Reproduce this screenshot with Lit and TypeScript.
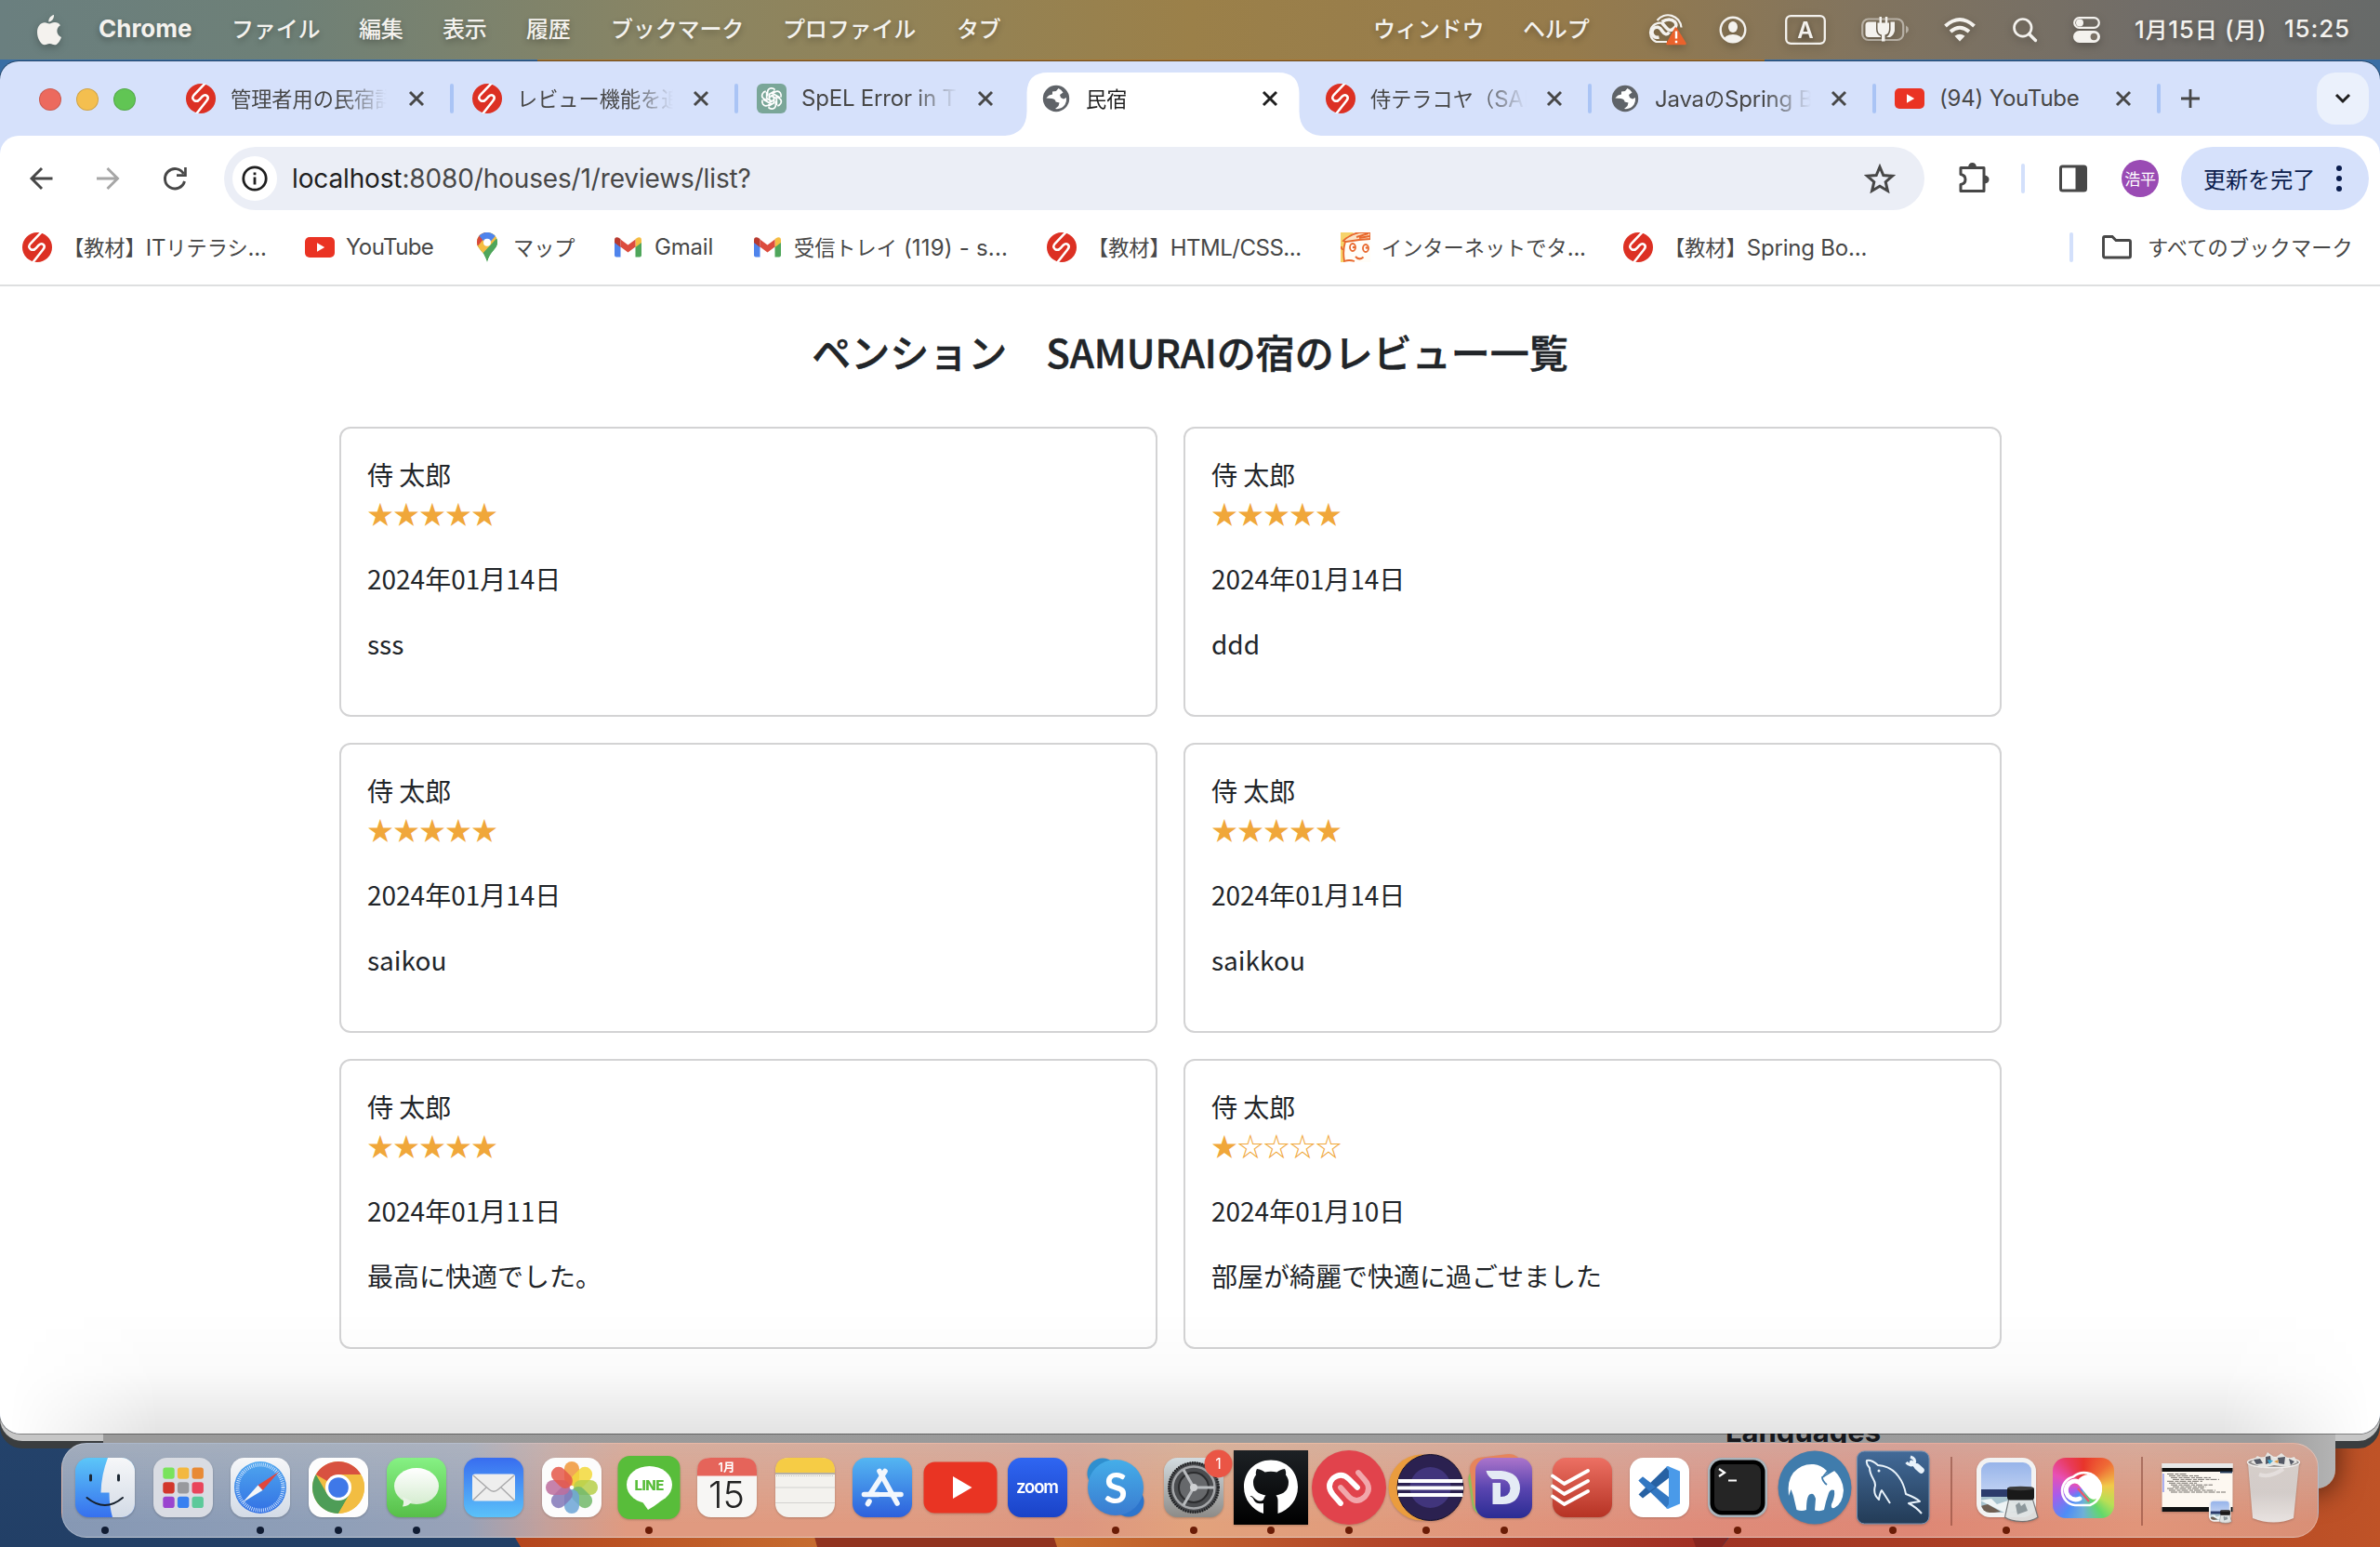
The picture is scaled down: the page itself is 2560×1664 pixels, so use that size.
import { LitElement, html, css, svg, nothing, type TemplateResult } from "lit";
import { customElement, property } from "lit/decorators.js";
import { classMap } from "lit/directives/class-map.js";

const CJK = /([\u3000-\u30ff\u3400-\u9fff\uff00-\uffef]+)/;

/** Japanese runs are set slightly smaller than the Latin ones beside them. */
const mixed = (text: string) =>
  text.split(CJK).map((run) => (CJK.test(run) ? html`<span class="cjk">${run}</span>` : run));

const cjkStyle = css`
  .cjk {
    font-size: 0.925em;
    font-family: "Noto Sans CJK JP", sans-serif;
    letter-spacing: 0;
  }
`;

/* ---------- small icons ---------- */

const samurai = html`<svg class="fav" viewBox="0 0 34 34">
  <circle cx="17" cy="17" r="17" fill="#dc3023" />
  <path d="M22.5 -1 L9.5 12.5 Q5.8 16.8 9.5 19.2 Q13 21.2 16 17.6 L18.8 14.6 Q21.6 11.8 24 13.8 Q26.6 16.2 23.6 19.6 L11.5 35"
    fill="none" stroke="#fff" stroke-width="2.7" stroke-linejoin="round" />
</svg>`;

const youtube = html`<svg class="fav" viewBox="0 0 32 32">
  <rect x="0" y="5" width="32" height="22" rx="5" fill="#ea3323" />
  <path d="M13 11.3 L21.2 16 L13 20.7 Z" fill="#fff" />
</svg>`;

const globe = html`<svg class="fav" viewBox="0 0 32 32">
  <circle cx="16" cy="16" r="14.2" fill="#5f6368" />
  <path d="M18.500 5 L16 8 L12 8.5 L12 11.5 L8.500 12.5 L5.300 15.5 L11.500 16 Q15.500 16.5 15.500 19.5 L19.500 20.5 L18.500 24 L15 27 Q21.500 28 25.500 22.5 Q27.500 19 27 15 L24 16.5 L21 15 L20 12 L23.500 9.5 Q21.500 6 18.500 5 Z" fill="#fff" />
</svg>`;

const openai = html`<svg class="fav" viewBox="0 0 32 32">
  <rect width="32" height="32" rx="6" fill="#7aa698" />
  <g fill="none" stroke="#fff" stroke-width="1.7">
    ${[0, 60, 120, 180, 240, 300].map(
      (a) => svg`<path transform=${`rotate(${a} 16 16)`} d="M11.6 13.4 V9 Q11.8 5.2 15.6 4.9 Q18 4.8 19.6 6.6 M13.6 18.4 V11.2 L19.6 7.7" />`
    )}
  </g>
</svg>`;

const mapPin = html`<svg class="fav" viewBox="0 0 32 32">
  <clipPath id="pin"><path d="M16 0 C9.500 0 5 4.800 5 10.800 C5 18 13.500 20.500 16 32 C18.500 20.500 27 18 27 10.800 C27 4.800 22.500 0 16 0 Z" /></clipPath>
  <g clip-path="url(#pin)">
    <rect width="32" height="32" fill="#4fa65b" />
    <path d="M0 0 H32 L8 26 L0 20 Z" fill="#f5bd42" />
    <path d="M0 0 H18 L4 17 Z" fill="#d9483b" />
    <path d="M7 3 L14 -2 H30 L16 14 Z" fill="#4f84ec" />
    <path d="M30 2 L27 6 L8 30 H32 Z" fill="#4fa65b" />
  </g>
  <circle cx="16" cy="10.800" r="4" fill="#fff" />
</svg>`;

const gmail = html`<svg class="fav" viewBox="0 0 32 32">
  <path d="M1 10 L7.500 14.500 V26.500 H3 Q1 26.500 1 24.500 Z" fill="#4f84ec" />
  <path d="M30 10 L23.500 14.500 V26.500 H28 Q30 26.500 30 24.500 Z" fill="#4fa65b" />
  <path d="M23.500 7 L26 5.500 Q30 4.500 30 8.500 V11 L23.500 16 Z" fill="#f5bd42" />
  <path d="M7.500 7 L5 5.500 Q1 4.500 1 8.500 V11 L7.500 16 Z" fill="#b83a2f" />
  <path d="M7.500 7.500 L15.500 13.500 L23.500 7.500 V15.500 L15.500 21.500 L7.500 15.500 Z" fill="#dc4c3e" />
</svg>`;

const face = html`<svg class="fav" viewBox="0 0 32 32">
  <rect width="32" height="32" fill="#fffdf8" />
  <path d="M0 0 H14 L4 12 V32 H0 Z" fill="#f6d36a" />
  <path d="M3 9 Q10 2 20 0 H32 V7 L20 8 L6 10 Z" fill="#fbe3c8" stroke="#e8692e" stroke-width="1.800" />
  <path d="M17 5 L30 1 M20 6 L31 4" stroke="#e8692e" stroke-width="2" />
  <path d="M5 10 Q2 20 4 31 Q9 29 15 31 M1 15 Q0 18 4 19" fill="none" stroke="#e8692e" stroke-width="1.800" />
  <ellipse cx="13" cy="16" rx="3" ry="4" fill="#fff" stroke="#e8692e" stroke-width="1.800" />
  <ellipse cx="27" cy="17" rx="3" ry="4" fill="#fff" stroke="#e8692e" stroke-width="1.800" />
  <circle cx="14" cy="16" r="1.300" fill="#e8692e" /><circle cx="28" cy="16.500" r="1.300" fill="#e8692e" />
  <path d="M16 26 Q20 30.500 24.500 26.500" fill="none" stroke="#e8692e" stroke-width="2" />
</svg>`;

const cross = html`<svg class="x" viewBox="0 0 24 24"><path d="M5 5 L19 19 M19 5 L5 19" stroke="currentColor" stroke-width="2.900" /></svg>`;

/* ---------- menu bar ---------- */

@customElement("mac-menubar")
class MacMenubar extends LitElement {
  static styles = [
    cjkStyle,
    css`
      :host {
        position: relative;
        display: grid;
        grid-template-columns: 1477px 293px 1fr;
        height: 64px;
        align-items: center;
        color: #f4f2ee;
        font: 500 26px Inter, "Noto Sans CJK JP", sans-serif;
        white-space: nowrap;
        background: linear-gradient(90deg, #6a7f7f 0%, #6e8077 12%, #8b8562 29%, #9b8049 50%, #967b4c 66%, #82745e 78%, #716d68 90%, #676a69 100%);
        text-shadow: 0 3px 7px rgba(0, 0, 0, 0.3);
      }
      .apps {
        display: grid;
        grid-template-columns: 66px 143px 137px 90px 90px 91px 185px 187px 1fr;
        padding-left: 40px;
        align-items: center;
      }
      .label {
        padding-bottom: 5px;
      }
      .app {
        font-weight: 700;
        padding-bottom: 3px;
      }
      .cjk {
        letter-spacing: -0.2px;
      }
      .more {
        display: grid;
        grid-template-columns: 161px 1fr;
      }
      .status {
        display: grid;
        grid-template-columns: 79px 71px 82px 89px 74px 65px 66px 161px 1fr;
        align-items: center;
      }
      svg {
        display: block;
        overflow: visible;
        filter: drop-shadow(0 3px 4px rgba(0, 0, 0, 0.25));
      }
      .date {
        letter-spacing: 0.8px;
        padding-bottom: 3px;
      }
      .date .cjk {
        letter-spacing: 0.5px;
      }
    `,
  ];
  render() {
    const left = ["ファイル", "編集", "表示", "履歴", "ブックマーク", "プロファイル", "タブ"];
    return html`
      <div class="apps">
        <svg width="26" height="33" viewBox="0 0 26 33" fill="#f4f2ee">
          <path d="M18 0 C18.300 4 15.500 7.500 12.300 7.400 C12 3.800 14.800 .600 18 0 Z" />
          <path d="M13 9.600 C14.500 9.600 16 8.100 19 8.100 C21.500 8.100 23.600 9.300 24.900 11.200 C19.600 14.300 20.500 21.700 26 23.900 C24.600 28 21.700 32.300 18.900 32.300 C16.900 32.300 16 31 13.400 31 C10.800 31 9.800 32.300 8 32.300 C4.200 32.300 0 25.300 0 18.700 C0 12.200 4 8.300 8 8.300 C10.400 8.300 12 9.600 13 9.600 Z" />
        </svg>
        <span class="app">Chrome</span>
        ${left.map((t) => html`<span class="label">${mixed(t)}</span>`)}
      </div>
      <div class="more"><span class="label">${mixed("ウィンドウ")}</span><span class="label">${mixed("ヘルプ")}</span></div>
      <div class="status">
        <svg width="44" height="34" viewBox="0 0 44 34" fill="none" stroke="#f4f2ee">
          <path d="M23 30 H11.500 A10.500 10.500 0 1 1 19.500 10.500" stroke-width="2.200" />
          <path d="M12.500 7 A14.500 14.500 0 0 1 38.500 14.500" stroke-width="2.200" />
          <path d="M14.500 25 Q8.500 26.500 6.800 20 Q7.500 13.500 13.500 14.300 Q16 15 18 18.500 Q22 24.500 25.500 19.500" stroke-width="3.600" />
          <path d="M17.500 8.500 Q26 3.500 31.500 8.500 Q34.500 12.500 31 15 Q26 20 22.500 15 L18 10" stroke-width="3.600" />
          <path d="M32.500 15.500 L42.500 32 H23.500 Z" fill="#ea622c" stroke="#ea622c" stroke-width="2.500" stroke-linejoin="round" />
          <path d="M33 18.500 V26.500 M33 28.800 V31.200" stroke="#fff" stroke-width="2.400" />
        </svg>
        <svg width="30" height="30" viewBox="0 0 30 30">
          <clipPath id="who"><circle cx="15" cy="15" r="13" /></clipPath>
          <circle cx="15" cy="15" r="13.300" fill="none" stroke="#f4f2ee" stroke-width="2.400" />
          <ellipse cx="15" cy="12" rx="5" ry="6" fill="#f4f2ee" />
          <ellipse cx="15" cy="27" rx="10.500" ry="7" fill="#f4f2ee" clip-path="url(#who)" />
        </svg>
        <svg width="44" height="32" viewBox="0 0 44 32">
          <rect x="1.200" y="1.200" width="41.600" height="29.600" rx="5" fill="none" stroke="#f4f2ee" stroke-width="2.300" />
          <text x="22" y="24.500" text-anchor="middle" font-size="24" font-weight="600" fill="#f4f2ee">A</text>
        </svg>
        <svg width="52" height="28" viewBox="0 0 52 28">
          <rect x="1.200" y="2.500" width="44" height="22.500" rx="6.500" fill="none" stroke="#f4f2ee" stroke-opacity=".5" stroke-width="2.200" />
          <path d="M48 9.500 Q51 11 51 13.800 Q51 16.600 48 18 Z" fill="#f4f2ee" opacity=".5" />
          <path d="M8 5.500 H16 V13 Q16 19 21 21 V22 H8 Q4.500 22 4.500 18.500 V9 Q4.500 5.500 8 5.500 Z" fill="#f4f2ee" />
          <path d="M31.500 5.500 H36 V15 Q35 20 31 22 H27 Q31 19 31.500 14 Z" fill="#f4f2ee" />
          <path d="M17.500 6.500 H30 V13 Q30 18.500 25.500 19.500 V26.500 H22 V19.500 Q17.500 18.500 17.500 13 Z M19.500 0 H22 V7 H19.500 Z M25.800 0 H28.300 V7 H25.800 Z" fill="#f4f2ee" />
        </svg>
        <svg width="34" height="26" viewBox="0 0 34 26" fill="none" stroke="#f4f2ee" stroke-width="4">
          <path d="M1.500 9 Q17 -5 32.500 9" /><path d="M7 15 Q17 6.500 27 15" />
          <path d="M17 25.500 L11.500 19.800 Q17 15.500 22.500 19.800 Z" fill="#f4f2ee" stroke="none" />
        </svg>
        <svg width="26" height="26" viewBox="0 0 26 26" fill="none" stroke="#f4f2ee">
          <circle cx="10.800" cy="10.800" r="9.300" stroke-width="2.700" /><path d="M17.500 17.500 L24.500 24.500" stroke-width="3.300" stroke-linecap="round" />
        </svg>
        <svg width="29" height="28" viewBox="0 0 29 28">
          <rect x="1.200" y="1.200" width="26.600" height="10.600" rx="5.300" fill="none" stroke="#f4f2ee" stroke-width="2.200" />
          <circle cx="7" cy="6.500" r="4" fill="#f4f2ee" />
          <rect x="0" y="15" width="29" height="13" rx="6.500" fill="#f4f2ee" /><circle cx="22.300" cy="21.500" r="3.700" fill="#7b7266" />
        </svg>
        <span class="date">${mixed("1月15日")} (${mixed("月")})</span><span class="date">15:25</span>
      </div>
    `;
  }
}

/* ---------- browser chrome ---------- */

interface Tab {
  icon: TemplateResult;
  title: string;
  active?: boolean;
  sep?: boolean;
}

const tabs: Tab[] = [
  { icon: samurai, title: "管理者用の民宿詳細", sep: true },
  { icon: samurai, title: "レビュー機能を追加", sep: true },
  { icon: openai, title: "SpEL Error in Thymeleaf" },
  { icon: globe, title: "民宿", active: true },
  { icon: samurai, title: "侍テラコヤ（SAMURAI", sep: true },
  { icon: globe, title: "JavaのSpring Boot", sep: true },
  { icon: youtube, title: "(94) YouTube", sep: true },
];

const bookmarks: [TemplateResult, string][] = [
  [samurai, "【教材】ITリテラシ..."],
  [youtube, "YouTube"],
  [mapPin, "マップ"],
  [gmail, "Gmail"],
  [gmail, "受信トレイ (119) - s..."],
  [samurai, "【教材】HTML/CSS..."],
  [face, "インターネットでタ..."],
  [samurai, "【教材】Spring Bo..."],
];

@customElement("browser-frame")
class BrowserFrame extends LitElement {
  static styles = [
    cjkStyle,
    css`
      :host {
        display: flex;
        flex-direction: column;
        overflow: hidden;
        background: #d6e1fb;
        color: #474747;
        font: 400 24px Inter, "Noto Sans CJK JP", sans-serif;
        letter-spacing: -0.2px;
        white-space: nowrap;
      }
      svg {
        display: block;
        flex: none;
      }
      .fav {
        width: 32px;
        height: 32px;
      }
      .strip {
        display: flex;
        height: 80px;
        align-items: center;
        position: relative;
      }
      .lights {
        display: flex;
        gap: 16px;
        width: 138px;
        padding: 2px 0 0 42px;
      }
      .light {
        width: 22px;
        height: 22px;
        border-radius: 50%;
        border: 1px solid rgba(0, 0, 0, 0.14);
      }
      .red {
        background: #ec6a5e;
      }
      .amber {
        background: #f4bf4f;
      }
      .green {
        background: #61c554;
      }
      .tab {
        position: relative;
        display: flex;
        align-items: center;
        width: 306px;
        height: 80px;
        padding-left: 20px;
        box-sizing: border-box;
        isolation: isolate;
      }
      .tab:nth-child(2) {
        width: 308px;
      }
      .tab:nth-child(2) .title {
        width: 170px;
      }
      .tab.active {
        color: #1f1f1f;
      }
      .shape {
        position: absolute;
        left: -19px;
        bottom: 0;
        z-index: -1;
      }
      .title {
        width: 168px;
        margin-left: 16px;
        overflow: hidden;
        line-height: 40px;
        mask-image: linear-gradient(90deg, #000 118px, transparent 168px);
      }
      .tab:last-of-type .title {
        mask-image: none;
      }
      .x {
        width: 24px;
        height: 24px;
        margin-left: 18px;
      }
      .sep {
        width: 4px;
        height: 32px;
        border-radius: 2px;
        background: #aac4f5;
        margin: 0 -4px 0 24px;
      }
      .plus {
        margin-left: 20px;
      }
      .drop {
        width: 56px;
        height: 56px;
        border-radius: 20px;
        background: #ebf1fc;
        display: grid;
        place-items: center;
        margin: 0 12px 0 auto;
      }
      .body {
        background: #fff;
        border-radius: 20px 20px 0 0;
        flex: 1;
      }
      .bar {
        display: grid;
        grid-template-columns: 72px 72px 69px 1829px 36px 68px 41px 67px 64px 202px;
        padding: 12px 0 0 28px;
        height: 68px;
        align-items: center;
      }
      .omni {
        display: flex;
        align-items: center;
        height: 68px;
        border-radius: 34px;
        background: #ebeef6;
        font-size: 28px;
        padding-right: 31px;
        box-sizing: border-box;
      }
      .info {
        width: 48px;
        height: 48px;
        border-radius: 50%;
        background: #fff;
        display: grid;
        place-items: center;
        margin: 0 16px 0 9px;
      }
      .url {
        flex: 1;
        letter-spacing: -0.14px;
      }
      .host {
        color: #1f1f1f;
      }
      .vr {
        width: 4px;
        height: 32px;
        border-radius: 2px;
        background: #d3e0fb;
      }
      .me {
        width: 40px;
        height: 40px;
        border-radius: 50%;
        background: #9a4bb4;
        color: #fff;
        font: 17px/40px "Noto Sans CJK JP", sans-serif;
        text-align: center;
      }
      .update {
        display: flex;
        align-items: center;
        height: 68px;
        border-radius: 34px;
        background: #d6e1fb;
        color: #0b1d4d;
        padding-left: 24px;
        box-sizing: border-box;
        gap: 22px;
        font-size: 26px;
      }
      .update .cjk {
        padding-bottom: 2px;
      }
      .marks {
        display: grid;
        grid-template-columns: 304px 180px 152px 150px 316px 316px 304px 480px 34px 1fr;
        padding: 0 0 0 24px;
        height: 80px;
        align-items: center;
        border-bottom: 2px solid #dedfe0;
      }
      .mark {
        display: flex;
        align-items: center;
        gap: 12px;
        line-height: 32px;
      }
      .mark:nth-child(2) {
        letter-spacing: -0.6px;
      }
      .mark:nth-child(5) {
        letter-spacing: 0.2px;
      }
      .mark:nth-child(6) {
        letter-spacing: -0.5px;
      }
      .mark.all {
        gap: 16px;
      }
      .mark.all .cjk {
        letter-spacing: 0.15px;
      }
    `,
  ];

  private tab(t: Tab) {
    return html`<div class=${classMap({ tab: true, active: !!t.active })}>
      ${t.active
        ? html`<svg class="shape" width="340" height="68" viewBox="0 0 340 68">
            <path d="M0 68 Q23 66 23.500 42 V22 Q24 0 46 0 H294 Q316 0 316.500 22 V42 Q317 66 340 68 Z" fill="#fff" />
          </svg>`
        : nothing}
      ${t.icon}
      <span class="title">${mixed(t.title)}</span>
      ${cross} ${t.sep ? html`<span class="sep"></span>` : nothing}
    </div>`;
  }

  render() {
    return html`
      <div class="strip">
        <div class="lights"><i class="light red"></i><i class="light amber"></i><i class="light green"></i></div>
        ${tabs.map((t) => this.tab(t))}
        <svg class="plus" width="24" height="24" viewBox="0 0 24 24"><path d="M12 2 V22 M2 12 H22" stroke="#474747" stroke-width="2.800" /></svg>
        <section class="drop">
          <svg width="20" height="12" viewBox="0 0 20 12"><path d="M3 2 L10 9 L17 2" fill="none" stroke="#1f1f1f" stroke-width="3" /></svg>
        </section>
      </div>
      <div class="body">
        <div class="bar">
          <svg width="32" height="28" viewBox="0 0 32 28" fill="none" stroke="#474747" stroke-width="2.900"><path d="M28.500 14 H6.500 M17 3 L6 14 L17 25" /></svg>
          <svg width="32" height="28" viewBox="0 0 32 28" fill="none" stroke="#a6a6a6" stroke-width="2.900"><path d="M4 14 H26 M15.500 3 L26.500 14 L15.500 25" /></svg>
          <svg width="32" height="28" viewBox="0 0 32 28"><path d="M25.500 9 A10.700 10.700 0 1 0 26.500 17" fill="none" stroke="#474747" stroke-width="2.900" /><path d="M28.800 2 V12 H18 V9.300 H26.100 V2 Z" fill="#474747" /></svg>
          <div class="omni">
            <span class="info"><svg width="28" height="28" viewBox="0 0 28 28"><circle cx="14" cy="14" r="12.200" fill="none" stroke="#1f1f1f" stroke-width="2.800" /><path d="M14 12.500 V20.500 M14 7.500 V10.300" stroke="#1f1f1f" stroke-width="2.800" /></svg></span>
            <span class="url"><span class="host">localhost</span>:8080/houses/1/reviews/list?</span>
            <svg width="34" height="32" viewBox="0 0 34 32"><path d="M17 3.500 L20.800 12.500 L30.500 13.300 L23.200 19.700 L25.400 29.200 L17 24.200 L8.600 29.200 L10.800 19.700 L3.500 13.300 L13.200 12.500 Z" fill="none" stroke="#474747" stroke-width="3" /></svg>
          </div>
          <span></span>
          <svg width="34" height="34" viewBox="0 0 34 34"><path d="M3 6.500 H28 V31.500 H3 V24.500 Q8 23.500 8 19 Q8 14.500 3 13.500 Z" transform="translate(0 -1)" fill="none" stroke="#474747" stroke-width="3" stroke-linejoin="round" /><path d="M11 5 Q11.500 0 15.500 0 Q19.500 0 20 5 Z M28.500 13.500 Q33.500 14 33.500 18 Q33.500 22 28.500 22.500 Z" fill="#474747" /></svg>
          <span class="vr"></span>
          <svg width="30" height="30" viewBox="0 0 30 30"><rect x="1.500" y="2" width="27" height="26" rx="2" fill="none" stroke="#474747" stroke-width="3" /><path d="M17.500 2 H28 V28 H17.500 Z" fill="#474747" /></svg>
          <span class="me">浩平</span>
          <div class="update">${mixed("更新を完了")}
            <svg width="8" height="30" viewBox="0 0 8 30" fill="#0b1d4d"><circle cx="4" cy="4" r="3" /><circle cx="4" cy="15" r="3" /><circle cx="4" cy="26" r="3" /></svg>
          </div>
        </div>
        <div class="marks">
          ${bookmarks.map(([icon, label]) => html`<span class="mark">${icon}<span>${mixed(label)}</span></span>`)}
          <span class="vr"></span>
          <span class="mark all"><svg width="34" height="28" viewBox="0 0 34 28"><path d="M2.500 23 V4 Q2.500 2.500 4 2.500 H12 L16 6.500 H30 Q31.500 6.500 31.500 8 V23.500 Q31.500 25 30 25 H4 Q2.500 25 2.500 23 Z" fill="none" stroke="#474747" stroke-width="2.900" /></svg><span>${mixed("すべてのブックマーク")}</span></span>
        </div>
        <slot></slot>
      </div>
    `;
  }
}

/* ---------- page ---------- */

interface Review {
  name: string;
  score: number;
  date: string;
  comment: string;
}

const reviews: Review[] = [
  { name: "侍 太郎", score: 5, date: "2024年01月14日", comment: "sss" },
  { name: "侍 太郎", score: 5, date: "2024年01月14日", comment: "ddd" },
  { name: "侍 太郎", score: 5, date: "2024年01月14日", comment: "saikou" },
  { name: "侍 太郎", score: 5, date: "2024年01月14日", comment: "saikkou" },
  { name: "侍 太郎", score: 5, date: "2024年01月11日", comment: "最高に快適でした。" },
  { name: "侍 太郎", score: 1, date: "2024年01月10日", comment: "部屋が綺麗で快適に過ごせました" },
];

@customElement("review-card")
class ReviewCard extends LitElement {
  @property({ attribute: false }) review!: Review;
  static styles = css`
    :host {
      display: block;
      box-sizing: border-box;
      height: 312px;
      padding: 28px;
      border: 2px solid #d3d3d4;
      border-radius: 12px;
      font: 400 28px/42px "Noto Sans CJK JP", sans-serif;
      letter-spacing: 0;
      color: #212529;
    }
    .row {
      margin: 0 0 28px;
    }
    .stars {
      color: #f0a73a;
    }
  `;
  render() {
    const { name, score, date, comment } = this.review;
    return html`
      <div>${name}</div>
      <div class="row stars">${"★".repeat(score)}${"☆".repeat(5 - score)}</div>
      <div class="row">${date}</div>
      <div class="row">${comment}</div>
    `;
  }
}

@customElement("review-page")
class ReviewPage extends LitElement {
  static styles = css`
    :host {
      display: block;
      padding: 38px 407px 0 365px;
    }
    h1 {
      margin: 0 -42px 0 0;
      height: 113px;
      font: 500 42px/64px "Noto Sans CJK JP", sans-serif;
      letter-spacing: 0;
      color: #212529;
      text-align: center;
      -webkit-text-stroke: 0.5px #212529;
    }
    .grid {
      display: grid;
      grid-template-columns: 880px 880px;
      gap: 28px;
    }
  `;
  render() {
    return html`
      <h1>ペンション　SAMURAIの宿のレビュー一覧</h1>
      <div class="grid">${reviews.map((r) => html`<review-card .review=${r}></review-card>`)}</div>
    `;
  }
}

/* ---------- dock ---------- */

const tile = (fill: string, inner: unknown = nothing) =>
  svg`<rect x="8" y="8" width="64" height="64" rx="14.500" fill=${fill} />${inner}`;

const range = (n: number) => Array.from({ length: n }, (_, i) => i);

const finder = svg`
  <clipPath id="fc"><rect x="8" y="8" width="64" height="64" rx="14.500" /></clipPath>
  <g clip-path="url(#fc)">
    <rect x="8" y="8" width="64" height="64" fill="url(#gFinder)" />
    <path d="M43 8 Q36 26 35.500 45.500 H44.500 Q44.500 60 48 72 H72 V8 Z" fill="url(#gPaper)" />
    <path d="M24.500 27 V32 M54.500 27 V32" stroke="#1c2733" stroke-width="3" stroke-linecap="round" />
    <path d="M20.500 51 Q40 67 59 51" fill="none" stroke="#16202c" stroke-width="2" stroke-linecap="round" />
  </g>`;

const launchColors = ["#79e35c", "#f3b83f", "#e88a35", "#d2372c", "#98999d", "#e9455b", "#9a45cf", "#3880f0", "#5cc99a"];
const launchpad = tile(
  "#d9dce3",
  launchColors.map((c, i) => svg`<rect x=${18.3 + (i % 3) * 15.6} y=${18.6 + Math.floor(i / 3) * 15.6} width="12.400" height="12.200" rx="2.800" fill=${c} />`)
);

const safari = tile(
  "url(#gPaper)",
  svg`<circle cx="40" cy="40" r="28" fill="url(#gSafari)" />
    <circle cx="40" cy="40" r="24.500" fill="none" stroke="#dcecff" stroke-width="4" stroke-dasharray=".8 1.338" />
    <path d="M60 23 L42.500 43 L37.500 37.500 Z" fill="#e0463c" /><path d="M21 56 L37.500 37.500 L42.500 43 Z" fill="#f4f6f8" />`
);

const chrome = tile(
  "#fdfdfd",
  svg`<circle cx="40" cy="40" r="28" fill="#f2bd42" />
    <path d="M40 40 L15.750 26 A28 28 0 0 1 64.250 26 L40 26 Z" fill="#d85140" />
    <path d="M15.750 26 A28 28 0 0 0 40 68 L52.100 47 L27.900 47 Z" fill="#4e9d57" />
    <path d="M64.250 26 A28 28 0 0 1 40 68 L52.100 47 L40 26 Z" fill="#f2bd42" />
    <circle cx="40" cy="40" r="14" fill="#fff" /><circle cx="40" cy="40" r="10.800" fill="#3f78e8" />`
);

const messages = tile(
  "url(#gMsg)",
  svg`<ellipse cx="40" cy="38.500" rx="24" ry="19.500" fill="url(#gBubble)" /><path d="M25 50 Q27 56 25 60.500 Q32 60 35 55 Z" fill="#e9f3e6" />`
);

const mail = tile(
  "url(#gMail)",
  svg`<rect x="17" y="25.500" width="46" height="29" rx="3" fill="#eeeeee" />
    <path d="M18 27 L35 42 Q40 46.500 45 42 L62 27 M18 53.500 L32 40 M62 53.500 L48 40" fill="none" stroke="#a9a9ab" stroke-width="1.400" />`
);

const petals = ["#f0973a", "#f2d93b", "#b7cf4b", "#73b96b", "#6ea5d6", "#8278b8", "#bd6d9d", "#e4584a"];
const photos = tile(
  "#fcfcfc",
  petals.map((c, i) => svg`<rect x="32" y="12" width="16" height="26" rx="8" fill=${c} opacity=".86" transform=${`rotate(${i * 45} 40 40)`} />`)
);

const line = svg`<rect x="6.500" y="6" width="67" height="68" rx="13" fill="#58bd3a" />
  <ellipse cx="40.500" cy="37" rx="24.500" ry="20" fill="#fff" /><path d="M32 54 L39 64 Q52 57 60 47 Z" fill="#fff" />
  <text x="40.500" y="42.500" text-anchor="middle" font-size="15" font-weight="800" fill="#58bd3a" textLength="32">LINE</text>`;

const calendar = svg`<rect x="8" y="8" width="64" height="64" rx="14.500" fill="#f7f6f4" />
  <path d="M8 27.500 V22 Q8 8 22.500 8 H57.500 Q72 8 72 22 V27.500 Z" fill="#e5645a" />
  <text x="39.500" y="23" text-anchor="middle" font-size="12.500" font-weight="600" fill="#fff">1月</text>
  <text x="39.500" y="62" text-anchor="middle" font-size="39" font-weight="300" fill="#222" textLength="39" lengthAdjust="spacingAndGlyphs">15</text>`;

const notes = svg`<rect x="8" y="8" width="64" height="64" rx="14.500" fill="#f3f2ee" />
  <path d="M8 24 V22 Q8 8 22.500 8 H57.500 Q72 8 72 22 V24 Z" fill="#f6cc45" />
  <path d="M8 25 H72" stroke="#a09a8c" stroke-width="1.300" /><path d="M9 27.500 H71" stroke="#b9b6ae" stroke-width="1.200" stroke-dasharray="1 1.300" />
  <path d="M8 40 H72 M8 56.500 H72" stroke="#d2d1d0" stroke-width="1.200" />`;

const appstore = tile(
  "url(#gStore)",
  svg`<g stroke="#f2f7fd" stroke-width="5.600" stroke-linecap="round" fill="none"><path d="M43 22.500 L27 47" /><path d="M37 22.500 L56 57" /><path d="M20.500 47.500 H36 M48 47.500 H60" /><path d="M26 55 L24.500 57.500" /></g><path d="M28 47.500 H50" stroke="#f2f7fd" stroke-width="5" />`
);

const ytApp = svg`<rect x="0.500" y="12.500" width="79" height="55" rx="12" fill="#e93423" /><path d="M32 28 L52.500 40 L32 52 Z" fill="#fff" />`;

const zoomApp = tile("url(#gZoom)", svg`<text x="40" y="45.500" text-anchor="middle" font-size="18.500" font-weight="600" fill="#fff" textLength="46">zoom</text>`);

const skype = svg`<circle cx="26" cy="25" r="16.500" fill="#2f8fcf" /><circle cx="54" cy="55" r="16.500" fill="#2d75cc" />
  <circle cx="40" cy="40" r="30" fill="url(#gSkype)" />
  <text x="40" y="56.500" text-anchor="middle" font-size="46" font-weight="700" fill="#fff" font-family="Lato">S</text>`;

const settings = svg`<rect x="8" y="8" width="64" height="64" rx="14.500" fill="url(#gSteel)" />
  <circle cx="40" cy="40" r="27.500" fill="#4b4d50" /><circle cx="40" cy="40" r="26.500" fill="none" stroke="#1d1e20" stroke-width="3" stroke-dasharray="1.300 1.300" />
  <circle cx="40" cy="40" r="22.500" fill="none" stroke="#a5a7aa" stroke-width="2.400" /><circle cx="40" cy="40" r="16" fill="#66686b" stroke="#2b2c2e" stroke-width="2" />
  <g stroke="#b9bcbf" stroke-width="3">${[0, 120, 240].map((a) => svg`<path d="M40 40 H62" transform=${`rotate(${a} 40 40)`} />`)}</g>
  <circle cx="40" cy="40" r="4" fill="#cfd1d3" />
  <circle cx="66.500" cy="14.500" r="15" fill="#ea5545" /><text x="66.500" y="20" text-anchor="middle" font-size="16" fill="#fff">1</text>`;

const github = svg`<rect width="80" height="80" fill="url(#gNight)" />
  <path d="M40 10.500 C23 10.500 11 23 11 39.500 C11 53 20 64 32 68 V57 C27 58 23 57 21 52 C20 50 18 50 17.500 49 C21 48 23 54 28 54.500 C30 54.500 32 54 32.500 52 C33 50 34 49 34.500 48.500 C26 47 21 43 21 34 C21 31 22.500 28.500 24 26.500 C23.500 24 24 22 25 20 C29 20.500 32 22.500 33.500 23.500 C38 22.500 42 22.500 46.500 23.500 C48 22.500 51 20.500 55 20 C56 22 56.500 24 56 26.500 C57.500 28.500 59 31 59 34 C59 43 54 47 45.500 48.500 C47 50 47.500 52 47.500 54 V68 C60 64 69 53 69 39.500 C69 23 57 10.500 40 10.500 Z" fill="#fff" />`;

const authy = svg`<circle cx="40" cy="40" r="40" fill="#e1434c" />
  <path d="M50 24 L57 32 Q65 41 57 50 Q48 58 40 50 L31 40" fill="none" stroke="#f1a7ab" stroke-width="5.800" stroke-linecap="round" />
  <path d="M31 57 L23 48 Q15 38 23 30 Q32 23 40 31 L49 40" fill="none" stroke="#fff" stroke-width="5.800" stroke-linecap="round" />`;

const eclipse = svg`<circle cx="35" cy="40" r="35.500" fill="#ea9c3e" /><circle cx="44.500" cy="40" r="35.500" fill="#2b2150" stroke="#15112c" stroke-width="1" />
  <circle cx="44.500" cy="40" r="22" fill="#41357c" /><path d="M10 33 H79.500 M9 40.500 H80 M10 48 H79.500" stroke="#fff" stroke-width="4.200" />`;

const dash = svg`<rect x="3" y="16" width="50" height="52" rx="13" fill="#8cbf5c" transform="rotate(-9 28 40)" /><rect x="5" y="6" width="56" height="60" rx="13" fill="#e6855c" transform="rotate(-7 30 36)" />
  <rect x="9" y="8" width="61" height="65" rx="14" fill="url(#gDash)" />
  <path d="M20.500 22 H37 Q57 24 57 41 Q56 58 38 58 H27.500 V35 H36 V50 Q46 50 46.500 41 Q46 31.500 36 31 H27 Q22 28 20.500 22 Z" fill="#e4ebf5" />`;

const todoist = tile(
  "url(#gTodo)",
  svg`<path d="M8 27.500 L20.500 36 L46 22 M8 38.500 L20.500 47 L46 33 M8 49.500 L20.500 58 L46 44" fill="none" stroke="#fff" stroke-width="3.800" stroke-linejoin="round" stroke-linecap="round" />`
);

const vscode = tile(
  "#fff",
  svg`<path d="M17.500 32.500 L22 28.500 L51 51 V62 L48 62.500 Z" fill="#3277c2" /><path d="M17.500 47.500 L22 51.500 L51 29 V18 L48 17.500 Z" fill="#2761a3" /><path d="M17.500 32.500 L22 28.500 L36 39.500 L29 44 Z" fill="#3277c2" /><path d="M49 17 L62 22.500 V57.500 L49 63 L47 62 L50 58 V22 L47 18 Z" fill="#4a9ae9" />`
);

const terminal = svg`<rect x="8" y="8" width="64" height="64" rx="14.500" fill="#aab4bb" /><rect x="10.500" y="10.500" width="59" height="59" rx="12.500" fill="#000" /><rect x="15" y="15" width="50" height="50" rx="8" fill="#252525" />
  <path d="M20 20 L26 24 L20 28 M30 32.500 H39" fill="none" stroke="#fff" stroke-width="2.200" />`;

const mamp = svg`<circle cx="40" cy="40" r="39.500" fill="#407cac" />
  <path d="M12 49 Q10 33 17 24 Q26 14 39 15 Q47 16 53 22 L49 27 L52 35 Q48 30 52 25 L61 22 Q70 30 71 43 Q70 58 61 62 Q57 63 58 58 Q62 50 61 43 Q57 41 55 46 Q52 54 50 64 Q46 66 40 64.500 L41 52 Q39 46 36 47 Q31 47 31 64 Q26 66 20.500 64 L17 49 L14.500 42 Z" fill="#fff" />
  <path d="M61 21 L48 29 Q48 33 53 37" fill="none" stroke="#407cac" stroke-width="1.800" />`;

const mysql = svg`<rect x="1.500" y="1" width="77.500" height="78" rx="8" fill="url(#gSql)" stroke="#7393b5" stroke-width="1" />
  <path d="M71 68 Q65 61 57 57 Q62 56 69 55 Q65 51 54 47 Q52 36 46 28 Q38 17 24 16 Q17 10 12 11 Q11 15 15 19 Q15 24 19 31 Q22 36 20.500 40 Q19 48 25 53 Q26 46 28 43 Q32 49 37 57" fill="none" stroke="#e9f3fb" stroke-width="2" stroke-linejoin="round" />
  <circle cx="25" cy="22" r="1.500" fill="#e9f3fb" />
  <path d="M60 13 L70.500 21.500" stroke="#e9f3fb" stroke-width="4.500" stroke-linecap="round" /><path d="M66 17.500 L70.500 21.500" stroke="#e9f3fb" stroke-width="6.500" stroke-linecap="round" />
  <path d="M59 7 Q65 9 63 14 Q59 18 54.500 13" fill="none" stroke="#e9f3fb" stroke-width="3.200" />`;

const preview = svg`<rect x="8" y="8" width="64" height="64" rx="14.500" fill="#f2f2f2" /><clipPath id="pv"><rect x="13" y="13" width="54" height="54" rx="9" /></clipPath>
  <g clip-path="url(#pv)"><rect width="80" height="44" fill="url(#gSky)" /><rect y="42" width="80" height="12" fill="#2c3c6c" /><rect y="50" width="80" height="30" fill="#a7c3ce" /><path d="M12 54 L24 52 L30 58 L42 54 L60 62 L40 68 Z" fill="#eef4f5" /><path d="M12 60 L20 58 L34 66 L20 68 H12 Z" fill="#6f5f52" /></g>
  <path d="M43 51 H68 L74 72 Q66 77 56 76.500 Q44 76 38.500 72 Z" fill="#dfe4e4" opacity=".93" stroke="#707476" stroke-width="1.200" /><path d="M50 59 L54 56 L56 60 L60 57 L63 65 L52 69 Z" fill="#8d989c" />
  <rect x="41" y="39.500" width="29" height="14" rx="3" fill="#191919" /><ellipse cx="55.500" cy="41" rx="14" ry="2.200" fill="#3c3c3c" />`;

const creative = html`<div class="wheel">
  <svg class="cloud" viewBox="7 8 66 65" fill="none" stroke="#fff">
    <path d="M47 59 H31 A15.500 15.500 0 0 1 29 28.500 A18 18 0 1 1 47 59 Z" stroke-width="2.600" />
    <path d="M36 52 Q29 55 23.500 49 Q18.500 42 24.500 35.500 Q32 30 38 37 L48 49 Q52 52 56 48" stroke-width="4.800" stroke-linecap="round" />
    <path d="M35 34 Q42 25 52 30 Q61 37 56 47 Q51 53 46 47 L37 36" fill="#fff" stroke-width="4.400" />
    <path d="M34 41 L46 55" stroke="#e85a6a" stroke-width="2.400" />
  </svg>
</div>`;

const minimised = svg`<rect x="2.500" y="14" width="76" height="52" fill="#fdf8f1" /><rect x="2.500" y="14" width="76" height="5" fill="#e8e8e8" /><rect x="2.500" y="19" width="76" height="4" fill="#111" /><path d="M65 23.500 H78" stroke="#243c5c" stroke-width="2" /><rect x="2.500" y="61" width="76" height="5" fill="#101214" />
  <path d="M4 25 V45" stroke="#8793f0" stroke-width="1.400" /><g stroke="#77736e" stroke-width="1">${range(11).map((i) => svg`<path d=${`M${8 + (i % 4) * 2} ${25.5 + i * 1.95} H${[30, 42, 55, 64, 46, 40, 57, 50, 48, 60, 71][i]}`} stroke-dasharray="7 1.500 4 1" />`)}</g>
  <g transform="translate(50 50) scale(.37)">${preview}</g>`;

const trash = svg`<path d="M12 14 L17 73 Q40 82 61 73 L67 14 Z" fill="url(#gBin)" opacity=".93" />
  <ellipse cx="39.500" cy="13" rx="28" ry="5.500" fill="#8f8b8a" stroke="#f2efed" stroke-width="1.500" />
  <path d="M15 13 L22 6 L29 9 L33 2 L41 8 L48 3 L55 9 L62 7 L65 13 L54 18 L40 16 L28 19 Z" fill="#e6e5e2" />
  <path d="M18 10 L25 9 L28 14 L21 15 Z M31 7 L36 6 L37 13 L31 15 Z M44 8 L52 7 L51 15 L45 14 Z M56 9 L62 12 L58 16 Z" fill="#555a66" /><path d="M33 10 L39 11 L35 15 Z" fill="#3fa7cf" /><path d="M40 12 L45 10 L44 14 Z" fill="#e0a04c" />
  <path d="M24 26 Q36 30 50 20" stroke="#fff" stroke-opacity=".35" stroke-width="4" fill="none" />`;

type DockItem = { art: unknown; on?: boolean; raw?: boolean } | null;
const dockItems: DockItem[] = [
  { art: finder, on: true },
  { art: launchpad },
  { art: safari, on: true },
  { art: chrome, on: true },
  { art: messages, on: true },
  { art: mail },
  { art: photos },
  { art: line, on: true },
  { art: calendar },
  { art: notes },
  { art: appstore },
  { art: ytApp },
  { art: zoomApp },
  { art: skype, on: true },
  { art: settings, on: true },
  { art: github, on: true },
  { art: authy, on: true },
  { art: eclipse, on: true },
  { art: dash, on: true },
  { art: todoist },
  { art: vscode },
  { art: terminal, on: true },
  { art: mamp },
  { art: mysql, on: true },
  null,
  { art: preview, on: true },
  { art: creative, raw: true },
  null,
  { art: minimised },
  { art: trash },
];

const grad = (id: string, ...c: string[]) => svg`<linearGradient id=${id} x1="0" y1="0" x2="0" y2="1">
  ${c.map((color, i) => svg`<stop offset=${i / (c.length - 1)} stop-color=${color} />`)}
</linearGradient>`;

@customElement("mac-dock")
class MacDock extends LitElement {
  static styles = css`
    :host {
      display: flex;
      box-sizing: border-box;
      height: 102px;
      padding: 6.5px 0 0 4.5px;
      border-radius: 27px;
      border: 1.5px solid rgba(255, 255, 255, 0.3);
      font-family: Inter, "Noto Sans CJK JP", sans-serif;
      background:
        linear-gradient(180deg, rgba(200, 200, 200, 0.42), rgba(200, 190, 185, 0) 85%),
        linear-gradient(90deg, #8698b4 0%, #8f9fb8 12%, #98a2b8 18%, #c5a09a 21.5%, #e09a80 25%, #e09a80 38%, #dd9680 45%, #e2a27c 50%, #e19c7c 57%, #df8c7a 72%, #de8775 82%, #e1957a 92%, #d98f76 100%);
    }
    .item {
      width: 83.6px;
      flex: none;
      display: flex;
      flex-direction: column;
      align-items: center;
      gap: 2px;
    }
    .pic {
      display: block;
      width: 80px;
      height: 80px;
      overflow: visible;
      filter: drop-shadow(0 1px 1px rgba(0, 0, 0, 0.2));
    }
    .dot {
      width: 8px;
      height: 8px;
      border-radius: 50%;
      background: #6a1c06;
    }
    .item:nth-child(-n + 6) .dot {
      background: #101c33;
    }
    .rule {
      flex: none;
      width: 2px;
      height: 74px;
      margin: 7px 16px 0 20px;
      background: rgba(125, 60, 45, 0.5);
    }
    .wheel {
      width: 66px;
      height: 65px;
      margin-top: 8px;
      border-radius: 14px;
      background: conic-gradient(from 0deg, #e8342b, #ef6a35 45deg, #f1c94a 85deg, #b9df55 120deg, #62d86b 145deg, #6fb0d8 180deg, #4f8df6 215deg, #a95bea 255deg, #e84fb5 295deg, #e83a5a 330deg, #e8342b);
    }
    .cloud {
      display: block;
    }
    .defs {
      position: absolute;
      width: 0;
      height: 0;
    }
  `;
  render() {
    return html`
      ${dockItems.map((d) =>
        d === null
          ? html`<div class="rule"></div>`
          : html`<div class="item">
              ${d.raw ? d.art : html`<svg class="pic" viewBox="0 0 80 80">${d.art}</svg>`}
              ${d.on ? html`<i class="dot"></i>` : nothing}
            </div>`
      )}
      <svg class="defs">
        <defs>
          ${grad("gFinder", "#5cc6f8", "#3670ee")} ${grad("gPaper", "#f6f7f9", "#d3dbe6")} ${grad("gSafari", "#4ea6ee", "#3270e4")}
          ${grad("gMsg", "#86f184", "#57bf49")} ${grad("gBubble", "#ffffff", "#d5ecd0")} ${grad("gMail", "#386df0", "#5bc2f9")}
          ${grad("gStore", "#54b6f2", "#2d60dc")} ${grad("gZoom", "#2f66f2", "#1a43c8")} ${grad("gSkype", "#45aee9", "#3a7bd0")}
          ${grad("gSteel", "#d3dce0", "#8d8b88")} ${grad("gNight", "#1d2125", "#000000")} ${grad("gDash", "#ab74cb", "#5a45b0", "#2a2c93")}
          ${grad("gTodo", "#ec7063", "#b63324")} ${grad("gSql", "#426a98", "#233b56")} ${grad("gSky", "#86a8e6", "#bed0f2")}
          ${grad("gBin", "#d8d3d0", "#d5d2d0", "#eceaea")}
        </defs>
      </svg>
    `;
  }
}

/* ---------- desktop ---------- */

@customElement("app-root")
class AppRoot extends LitElement {
  static styles = css`
    :host {
      display: block;
      position: relative;
      width: 2560px;
      height: 1664px;
      overflow: hidden;
      background: #24436b;
    }
    .wall {
      position: absolute;
      left: 0;
      top: 0;
      display: block;
    }
    .win {
      position: absolute;
    }
    .page {
      left: 111px;
      top: 900px;
      width: 2401px;
      height: 701px;
      border-radius: 0 0 20px 20px;
      background: linear-gradient(90deg, #999, #9b9b9b 97%, #b4b4b4);
      box-shadow: 0 4px 30px rgba(0, 0, 0, 0.6);
    }
    .languages {
      position: absolute;
      left: 1745px;
      top: 620px;
      font: 700 31px/40px Inter, sans-serif;
      color: #15171c;
    }
    .dark {
      left: 0;
      top: 900px;
      width: 2560px;
      height: 658px;
      border-radius: 0 0 24px 24px;
      background: #3a3d3f;
      clip-path: polygon(0 0, 111px 0, 111px 100%, 0 100%, 0 0, 100% 0, 100% 100%, 2512px 100%, 2512px 0);
    }
    .pale {
      left: 0;
      top: 900px;
      width: 2560px;
      height: 650px;
      border-radius: 0 0 24px 24px;
      background: #c6c6c6;
      clip-path: polygon(0 0, 111px 0, 111px 100%, 0 100%, 0 0, 100% 0, 100% 100%, 2512px 100%, 2512px 0);
    }
    .front {
      left: 0;
      top: 66px;
      width: 2560px;
      height: 1476px;
      border-radius: 20px 20px 22px 22px;
      box-shadow: 0 0 0 1px rgba(0, 0, 0, 0.35);
    }
    .shade {
      position: absolute;
      left: 0;
      top: 1410px;
      width: 2560px;
      height: 132px;
      border-radius: 0 0 22px 22px;
      background: linear-gradient(180deg, rgba(0, 0, 0, 0), rgba(0, 0, 0, 0.02) 50%, rgba(0, 0, 0, 0.11));
      mask-image: linear-gradient(90deg, transparent 10px, #000 170px, #000 2390px, transparent 2550px);
    }
    mac-dock {
      position: absolute;
      left: 66px;
      top: 1552px;
      width: 2428px;
    }
  `;
  render() {
    return html`
      <svg class="wall" width="2560" height="1664" viewBox="0 0 2560 1664">
        <defs>
          <linearGradient id="a" x1="0" x2="1" y1="0" y2="0"><stop offset="0" stop-color="#b3431c" /><stop offset="1" stop-color="#c66c30" /></linearGradient>
          <linearGradient id="b" x1="0" x2="1" y1="0" y2="0"><stop offset="0" stop-color="#c8702f" /><stop offset=".5" stop-color="#b3472a" /><stop offset="1" stop-color="#a02f24" /></linearGradient>
          <linearGradient id="c" x1="0" x2="1" y1="0" y2="0"><stop offset="0" stop-color="#9f3323" /><stop offset="1" stop-color="#bf5327" /></linearGradient>
          <linearGradient id="d" x1="0" x2="0" y1="0" y2="1"><stop offset="0" stop-color="#3a70a8" /><stop offset="1" stop-color="#223f66" /></linearGradient>
        </defs>
        <rect width="2560" height="1664" fill="url(#d)" />
        <rect x="578" y="62" width="1320" height="6" fill="#a87430" />
        <path d="M540 1630 L560 1664 H880 L870 1630 Z" fill="url(#a)" />
        <path d="M870 1630 L879 1664 H1140 L1126 1630 Z" fill="#91331f" />
        <path d="M1126 1630 L1137 1664 H1830 L1815 1630 Z" fill="url(#b)" />
        <path d="M1812 1630 L1824 1664 H1852 L1875 1630 Z" fill="#86251f" />
        <path d="M1870 1640 L1852 1664 H2560 V1400 H2300 Z" fill="url(#c)" />
      </svg>
      <div class="win page"><span class="languages">Languages</span></div>
      <div class="win dark"></div>
      <div class="win pale"></div>
      <mac-menubar></mac-menubar>
      <browser-frame class="win front"><review-page></review-page></browser-frame>
      <div class="shade"></div>
      <mac-dock></mac-dock>
    `;
  }
}
